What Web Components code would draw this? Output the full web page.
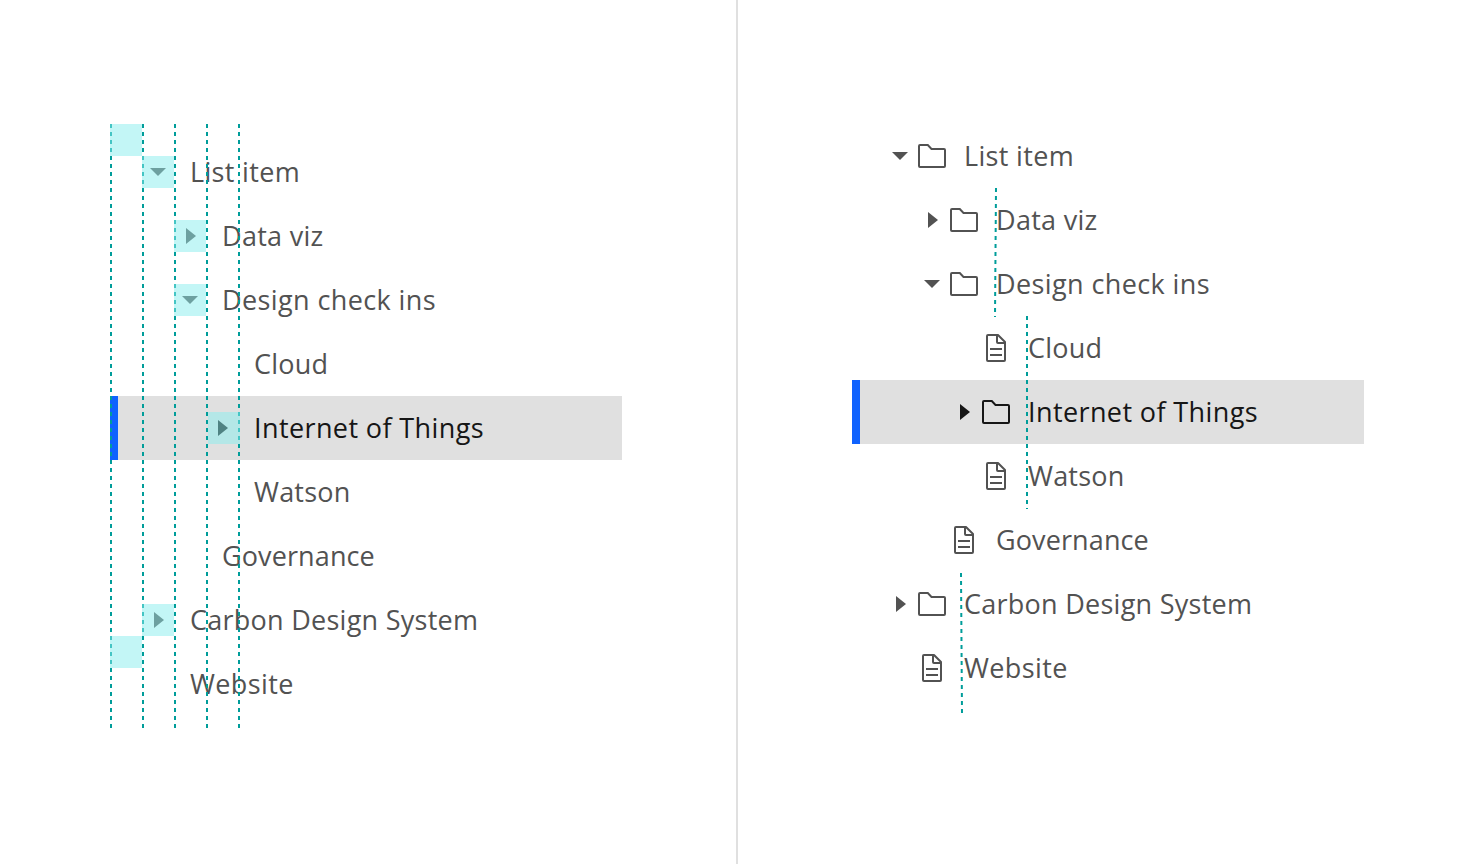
<!DOCTYPE html>
<html lang="en"><head><meta charset="utf-8"><title>Tree view</title>
<style>
html,body{margin:0;height:100%;background:#fff}
body{font-family:"Open Sans","Noto Sans",sans-serif}
</style></head><body>
<tree-spec></tree-spec>
<script>
class TreeIcon extends HTMLElement{
  constructor(){super();this.attachShadow({mode:'open'});}
  connectedCallback(){
    const art={
      down:'<path fill="currentColor" d="M8 12h16l-8 8z"/>',
      right:'<path fill="currentColor" d="M12 8v16l10-8z"/>',
      folder:'<path stroke="currentColor" d="M4 5h7.8l3.7 4H28a1 1 0 0 1 1 1v16a1 1 0 0 1-1 1H4a1 1 0 0 1-1-1V6a1 1 0 0 1 1-1z"/>',
      document:'<path fill="currentColor" d="M25.7 9.3l-7-7A.9.9 0 0 0 18 2H8a2 2 0 0 0-2 2v24a2 2 0 0 0 2 2h16a2 2 0 0 0 2-2V10a.9.9 0 0 0-.3-.7zM18 4.4l5.6 5.6H18zM24 28H8V4h8v6a2 2 0 0 0 2 2h6z"/><path fill="currentColor" d="M10 22h12v2H10zM10 16h12v2H10z"/>'
    };
    this.shadowRoot.innerHTML=`<style>:host{display:block;flex:none;width:32px;height:32px}svg{display:block}</style><svg width="32" height="32" viewBox="0 0 32 32" fill="none" stroke-width="2">${art[this.getAttribute('name')]||''}</svg>`;
  }
}
class TreeLabel extends HTMLElement{
  constructor(){super();this.attachShadow({mode:'open'}).innerHTML='<style>:host{display:block;white-space:nowrap;font-size:27px;line-height:32px}span{display:inline-block}</style><span><slot></slot></span>';}
  connectedCallback(){
    // Spread the letters so the label fills its nominal advance width.
    const s=this.shadowRoot.querySelector('span');
    const n=this.textContent.length;
    s.style.letterSpacing=((+this.getAttribute('advance')-s.getBoundingClientRect().width)/n)+'px';
  }
}
class TreeRow extends HTMLElement{
  constructor(){super();this.attachShadow({mode:'open'}).innerHTML='<style>:host{display:flex;align-items:center;box-sizing:border-box;height:64px;padding-left:var(--indent);color:#525252}:host([selected]){background:#e0e0e0;color:#161616;box-shadow:inset 8px 0 #0f62fe}</style><slot></slot>';}
}
const ROWS=[['List item',110,0,'down'],['Data viz',101.5,1,'right'],['Design check ins',214,1,'down'],['Cloud',74.2,2,''],['Internet of Things',230,2,'right'],['Watson',96.5,2,''],['Governance',152.9,1,''],['Carbon Design System',288.2,0,'right'],['Website',103.8,0,'']];
class TreeView extends HTMLElement{
  constructor(){super();this.attachShadow({mode:'open'});}
  connectedCallback(){
    const icons=this.hasAttribute('icons');
    const rows=ROWS.map(([t,w,l,a])=>{
      const label=`<tree-label advance="${w}">${t}</tree-label>`;
      const kind=a?'folder':'document';
      return `<tree-row style="--indent:${32+l*32}px" ${t.startsWith('Internet')?'selected':''}><tree-icon name="${a}"></tree-icon>${icons?`<tree-icon name="${kind}"></tree-icon>`:''}${label}</tree-row>`;
    }).join('');
    this.shadowRoot.innerHTML=`<style>:host{display:block;position:relative;width:512px}tree-label{margin-left:16px}</style>${rows}<slot></slot>`;
  }
}
class SpecOverlay extends HTMLElement{
  constructor(){super();this.attachShadow({mode:'open'});}
  connectedCallback(){
    const left=this.getAttribute('kind')==='indent';
    const line=(a,b,c,d)=>`<path d="M${a} ${b}L${c} ${d}"/>`;
    const guides=left?[1,33,65,97,129].map(x=>line(x,-16,x,588)).join(''):line(144,64,143,193)+line(175,192,175,385)+line(109,449,110,589);
    const boxes=left?[[0,-16],[32,16],[64,80],[64,144],[98,272],[32,464],[0,496]].map(([x,y])=>`<path d="M${x} ${y}h32v32h-32z"/>`).join(''):'';
    this.shadowRoot.innerHTML=`<style>:host{position:absolute;inset:0;pointer-events:none}svg{display:block;overflow:visible}</style><svg width="512" height="576"><g stroke="#009d9a" stroke-width="2" stroke-dasharray="4 4">${guides}</g><g fill="#87eded" fill-opacity=".5">${boxes}</g></svg>`;
  }
}
class TreeSpec extends HTMLElement{
  constructor(){super();this.attachShadow({mode:'open'}).innerHTML=`<style>
:host{display:grid;grid-template-columns:738px 734px;height:864px;overflow:hidden}
section{box-sizing:border-box}
.indent{padding:140px 0 0 110px;border-right:2px solid #e0e0e0}
.files{padding:124px 0 0 114px}
</style><section class="indent"><tree-view><spec-overlay kind="indent"></spec-overlay></tree-view></section><section class="files"><tree-view icons><spec-overlay kind="files"></spec-overlay></tree-view></section>`;}
}
customElements.define('tree-icon',TreeIcon);
customElements.define('tree-label',TreeLabel);
customElements.define('tree-row',TreeRow);
customElements.define('spec-overlay',SpecOverlay);
customElements.define('tree-view',TreeView);
customElements.define('tree-spec',TreeSpec);
</script></body></html>
